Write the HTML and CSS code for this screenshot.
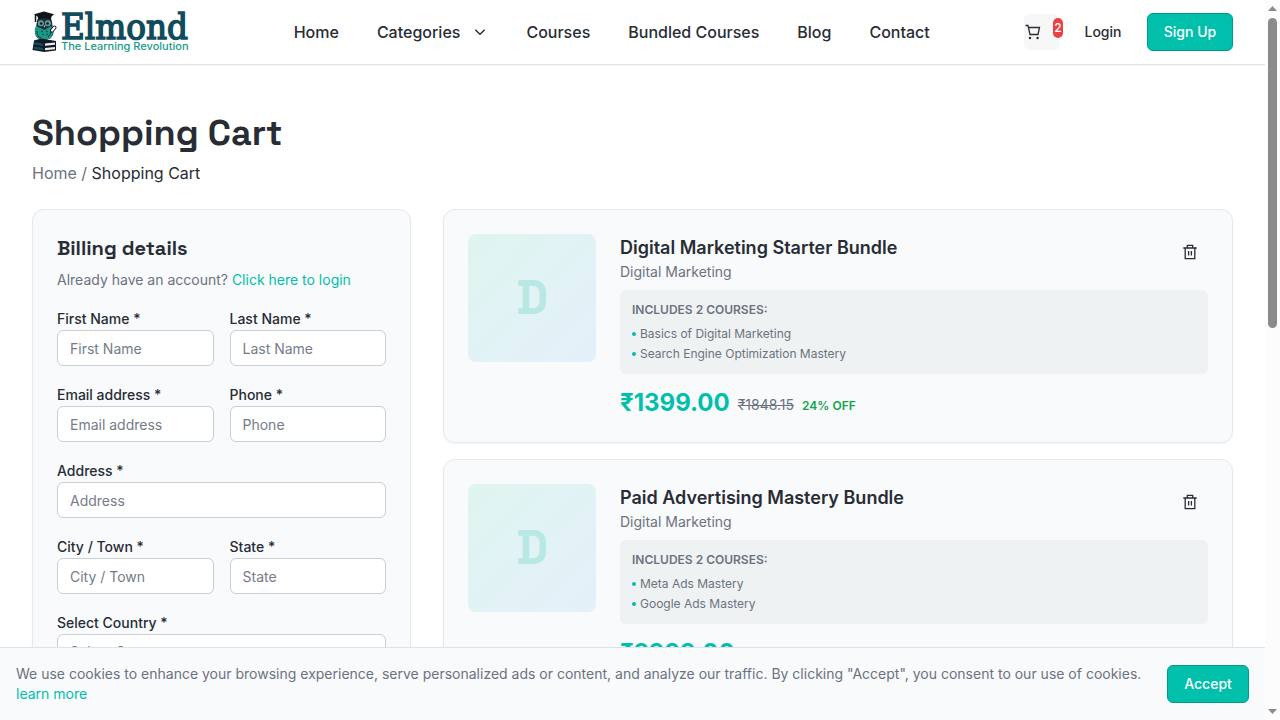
FILE: index.html
```html
<!DOCTYPE html>
<html lang="en">
<head>
<meta charset="utf-8">
<title>Shopping Cart - Elmond</title>
<link rel="stylesheet" href="styles.css">
</head>
<body>
<div class="page">
  <header class="header">
    <a class="logo" aria-label="Elmond">
      <svg width="157" height="42" viewBox="0 0 157 42">
        <path d="M5 10 Q5 6 12 6 Q20 6 20 11 L21.500 22 Q20 29 12 29 Q4 29 3 22Z" fill="#17333a"/>
        <path d="M4 15 Q1.500 20 4 25 L8 28 L18 28 Q22 23 21 18 L19 15 L12.500 19Z" fill="#199a88"/>
        <path d="M2 3.200 L12 .6 L22 3.200 L19.500 5.500 L19 8.500 Q12 6 6.500 8.500 L5.500 5.500Z" fill="#10151c"/>
        <path d="M3.500 3.500 V11" stroke="#10151c" stroke-width="1.500"/>
        <circle cx="8.900" cy="12.300" r="3" fill="#6c9898"/><circle cx="15.900" cy="12.300" r="3" fill="#6c9898"/>
        <circle cx="9.200" cy="12.500" r="1.300" fill="#10151c"/><circle cx="15.600" cy="12.500" r="1.300" fill="#10151c"/>
        <path d="M11.500 14.500 h2 l-1 2z" fill="#d6d8d5"/>
        <path d="M9 20 l2 1 M14 20 l2 1 M10 23 l2 1 M14 24 l2-1 M5 20 q0 6 4 7 M19 19 q0 5 -3 7" stroke="#103c40" stroke-width="1" fill="none"/>
        <path d="M20 19.500 L22.500 16.500" stroke="#10151c" stroke-width="4" stroke-linecap="round"/>
        <path d="M20 19.500 L22.500 16.500" stroke="#fff" stroke-width="2.200" stroke-linecap="round"/>
        <path d="M2 29.500 L9 27.500 L24 30 L24 39.500 L12 41 L.5 39Z" fill="#111b25"/>
        <path d="M2 31 L11 32.500 V35 L2 33.500Z M2 35.500 L11 37 V39.300 L2 38Z" fill="#174b5c"/>
        <path d="M13 32.500 L23 31.500 V33.700 L13 34.700Z M13 37 L23 36 V38.300 L13 39.300Z" fill="#e8eeee"/>
        <text class="logo-name" x="29" y="27.500" textLength="127" lengthAdjust="spacingAndGlyphs">Elmond</text>
        <text class="logo-tag" x="29" y="39.300" textLength="127.500" lengthAdjust="spacingAndGlyphs">The Learning Revolution</text>
      </svg>
    </a>
    <nav class="nav">
      <a>Home</a>
      <a class="nav-drop">Categories
        <svg width="16" height="16" viewBox="0 0 16 16"><path d="M3.300 5.700 L8 10.300 L12.700 5.700" fill="none" stroke="currentColor" stroke-width="1.400"/></svg>
      </a>
      <a>Courses</a><a>Bundled Courses</a><a>Blog</a><a>Contact</a>
    </nav>
    <div class="actions">
      <a class="cart">
        <svg width="18" height="18" viewBox="0 0 18 18" fill="none" stroke="currentColor" stroke-width="1.300"><path d="M1.500 2.500 H4 L6 11.500 H14 L15.500 4.500 H4.500"/><circle cx="6" cy="15" r="1.200" fill="currentColor" stroke="none"/><circle cx="13.600" cy="15" r="1.200" fill="currentColor" stroke="none"/></svg>
        <span class="cart-count">2</span>
      </a>
      <a class="login">Login</a>
      <a class="btn">Sign Up</a>
    </div>
  </header>

  <main class="main">
    <h1 class="title">Shopping Cart</h1>
    <div class="crumbs">Home / <span>Shopping Cart</span></div>
    <div class="columns">
      <section class="card billing">
        <h2 class="billing-title">Billing details</h2>
        <p class="account">Already have an account? <a>Click here to login</a></p>
        <form class="form">
          <label class="field">First Name *<input placeholder="First Name"></label>
          <label class="field">Last Name *<input placeholder="Last Name"></label>
          <label class="field">Email address *<input placeholder="Email address"></label>
          <label class="field">Phone *<input placeholder="Phone"></label>
          <label class="field wide">Address *<input placeholder="Address"></label>
          <label class="field">City / Town *<input placeholder="City / Town"></label>
          <label class="field">State *<input placeholder="State"></label>
          <div class="field wide">Select Country *<div class="select">Select Country</div></div>
        </form>
      </section>
      <section class="items">
        <article class="card item">
          <div class="thumb">D</div>
          <div class="info">
            <div class="item-head">
              <div><h3 class="item-title">Digital Marketing Starter Bundle</h3><p class="category">Digital Marketing</p></div>
              <button class="remove" aria-label="Remove"><svg width="16" height="16" viewBox="0 0 16 16" fill="none" stroke="currentColor" stroke-width="1.300"><path d="M1.300 4 H14.700 M5.300 4 V1.300 H10.700 V4 M3.200 4 V14.600 H12.800 V4 M6.600 7 V11.600 M9.400 7 V11.600"/></svg></button>
            </div>
            <div class="includes">
              <strong>INCLUDES 2 COURSES:</strong>
              <ul><li>Basics of Digital Marketing</li><li>Search Engine Optimization Mastery</li></ul>
            </div>
            <div class="prices"><b>₹1399.00</b><s>₹1848.15</s><em>24% OFF</em></div>
          </div>
        </article>
        <article class="card item">
          <div class="thumb">D</div>
          <div class="info">
            <div class="item-head">
              <div><h3 class="item-title">Paid Advertising Mastery Bundle</h3><p class="category">Digital Marketing</p></div>
              <button class="remove" aria-label="Remove"><svg width="16" height="16" viewBox="0 0 16 16" fill="none" stroke="currentColor" stroke-width="1.300"><path d="M1.300 4 H14.700 M5.300 4 V1.300 H10.700 V4 M3.200 4 V14.600 H12.800 V4 M6.600 7 V11.600 M9.400 7 V11.600"/></svg></button>
            </div>
            <div class="includes">
              <strong>INCLUDES 2 COURSES:</strong>
              <ul><li>Meta Ads Mastery</li><li>Google Ads Mastery</li></ul>
            </div>
            <div class="prices"><b>₹2999.00</b></div>
          </div>
        </article>
      </section>
    </div>
  </main>
</div>
<div class="cookies">
  <p>We use cookies to enhance your browsing experience, serve personalized ads or content, and analyze our traffic. By clicking "Accept", you consent to our use of cookies. <a>learn more</a></p>
  <a class="btn accept">Accept</a>
</div>
<div class="scrollbar">
  <svg width="9" height="5" viewBox="0 0 9 5"><path d="M0 5 L4.500 0 L9 5Z" fill="#8b8b8b"/></svg>
  <div class="thumb-bar"></div>
  <svg class="down" width="9" height="5" viewBox="0 0 9 5"><path d="M0 0 L4.500 5 L9 0Z" fill="#8b8b8b"/></svg>
</div>
</body>
</html>
```
FILE: styles.css
```css
* { box-sizing: border-box; margin: 0; padding: 0; }
body { height: 720px; overflow: hidden; background: #fff; color: #282c35; font: 14px/20px Inter, sans-serif; }
.page { width: 1265px; height: 720px; overflow: hidden; }
.header { display: flex; align-items: center; height: 65px; padding: 0 32px; border-bottom: 1px solid #dfe4e9; box-shadow: 0 1px 2px rgba(0,0,0,.04); }
.logo { width: 261.7px; height: 42px; }
.logo svg { display: block; overflow: visible; }
.logo-name { font: 36px "DejaVu Serif Condensed", "DejaVu Serif", serif; fill: #114c5c; stroke: #114c5c; stroke-width: 1.5px; }
.logo-tag { font: 500 9.8px Inter, sans-serif; fill: #169b87; }
.nav { display: flex; gap: 38px; font-size: 16px; font-weight: 500; line-height: 24px; white-space: nowrap; }
.nav-drop { display: flex; align-items: center; gap: 12px; }
.actions { display: flex; align-items: center; margin-left: auto; font-weight: 500; }
.cart { position: relative; display: flex; align-items: center; width: 36px; height: 36px; margin-right: 24.5px; border-radius: 6px; background: #f7f7f7; }
.cart-count { position: absolute; left: 29px; top: 4px; width: 10px; height: 20px; border-radius: 5px; background: #ec4141; color: #fff; font-size: 12px; line-height: 20px; text-align: center; }
.login { margin-right: 25.5px; }
.btn { display: flex; align-items: center; justify-content: center; width: 86px; height: 38px; border: 1px solid #009a87; border-radius: 6px; background: #00bfab; color: #fff; font-weight: 500; }
.main { padding: 48px 32px 0; }
.title { font: bold 36px/40px "Space Grotesk", Inter, sans-serif; white-space: nowrap; }
.crumbs { margin-top: 8px; color: #6b7280; font-size: 16px; line-height: 24px; }
.crumbs span { color: #282c35; }
.columns { display: grid; grid-template-columns: 379px 790px; gap: 32px; margin-top: 24px; }
.card { border: 1px solid #e5e9ed; border-radius: 12px; background: #f9fafc; box-shadow: 0 1px 2px rgba(0,0,0,.05); padding: 24px; }
.billing-title { font: bold 20px/28px "Space Grotesk", Inter, sans-serif; }
.account { margin-top: 8px; color: #6b7280; }
.account a, .cookies p a { color: #00bfab; }
.form { display: grid; grid-template-columns: 1fr 1fr; gap: 19px 16px; margin-top: 19px; }
.field { display: flex; flex-direction: column; gap: 1px; min-width: 0; font-weight: 500; }
.wide { grid-column: 1 / 3; }
.field input, .select { width: 100%; height: 36px; padding: 0 12px; border: 1px solid #c8cfd7; border-radius: 6px; background: #fff; font: 14px/20px Inter, sans-serif; }
.field input::placeholder { color: #757c89; }
.select { padding-top: 7px; color: #757c89; }
.items { display: flex; flex-direction: column; gap: 16px; }
.item { display: flex; gap: 24px; height: 234px; }
.thumb { display: flex; align-items: center; justify-content: center; width: 128px; height: 128px; border-radius: 8px; background: linear-gradient(135deg, #dff5f0, #e4f0fa); color: #b8e8e4; font: bold 48px/48px "Space Grotesk", "DejaVu Sans Mono", monospace; }
.info { flex: 1; }
.item-head { display: flex; justify-content: space-between; height: 48px; }
.item-title { font-size: 18px; font-weight: 600; line-height: 28px; }
.category { color: #6b7280; }
.remove { display: flex; align-items: center; justify-content: center; width: 36px; height: 36px; border: 0; background: none; color: #282c35; }
.includes { height: 84px; margin-top: 8px; padding: 12px; border-radius: 6px; background: #eff2f3; color: #6b7280; font-size: 12px; line-height: 16px; }
.includes strong { display: block; font-weight: 600; }
.includes ul { display: grid; gap: 4px; margin-top: 8px; list-style: none; }
.includes li { display: flex; align-items: center; gap: 4px; }
.includes li::before { content: ""; width: 4px; height: 4px; border-radius: 2px; background: #00bfab; }
.prices { display: flex; align-items: baseline; gap: 8px; margin-top: 12px; line-height: 20px; }
.prices b { align-self: flex-start; color: #00bfab; font-size: 24px; line-height: 34px; }
.prices s { margin-top: 9px; color: #6b7280; }
.prices em { color: #16a34a; font-size: 12px; font-style: normal; font-weight: 600; }
.cookies { position: fixed; left: 0; bottom: 0; display: flex; align-items: center; justify-content: space-between; width: 1265px; height: 73px; padding: 0 16px; border-top: 1px solid #dfe3e8; background: #f9fafc; color: #6b7280; }
.cookies p { width: 1135px; }
.accept { width: 82px; }
.scrollbar { position: fixed; top: 0; right: 0; display: flex; flex-direction: column; width: 15px; height: 720px; padding: 6px 3px; background: #fcfcfc; }
.scrollbar .thumb-bar { width: 9px; height: 310px; margin-top: 7px; border-radius: 5px; background: #8b8b8b; }
.down { margin-top: auto; }
```
